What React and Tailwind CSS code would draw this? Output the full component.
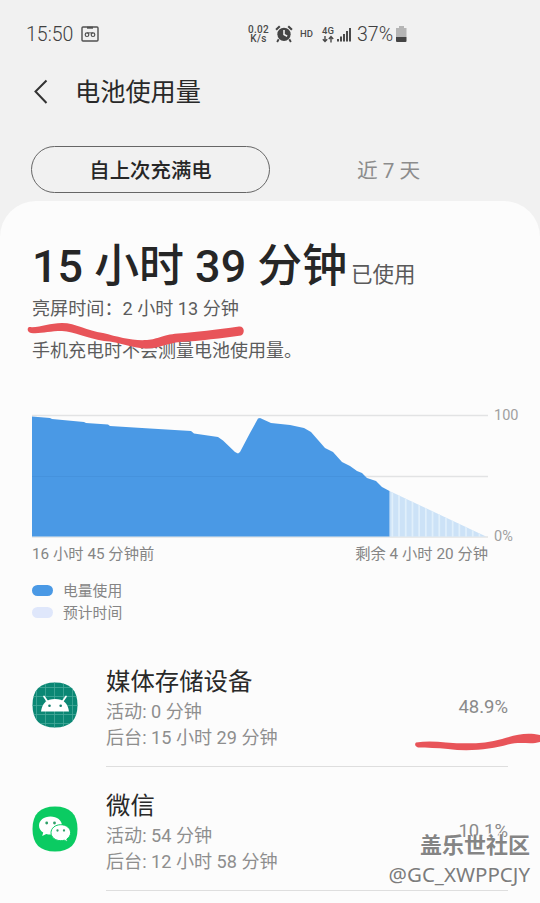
import React from "react";

const used =
  "M32 416.5 L50 418 L52 419 L84 422 L86 423 L108 424.5 L110 426 L150 428.5 L191 431 L194 433.5 L218 437 L223 440.5 L235 452 L238 453.5 L240 452 L250 433 L258 418.5 L260 418 L271 423 L290 425 L304 428 L311 432 L325 448 L333 452 L342 462 L350 466 L357 471 L362 473 L367 478 L376 481 L382 487 L389.5 491 L389.5 536.5 L32 536.5 Z";

const stripes = Array.from({ length: 14 }, (_, i) => 391.5 + i * 6.7);

function Chart() {
  return (
    <svg className="block w-[540px] h-[136px]" viewBox="0 406 540 136">
      <defs>
        <clipPath id="forecast">
          <path d="M389.5 491 L486 536.5 L389.5 536.5 Z" />
        </clipPath>
      </defs>
      <path d="M32 415.5H488M32 476.5H488M32 537H488" stroke="#e2e3e4" strokeWidth="1.3" />
      <path d="M389.5 491 L486 536.5 L389.5 536.5 Z" fill="#cce2f7" />
      <g clipPath="url(#forecast)">
        {stripes.map((x) => (
          <rect key={x} x={x} y="490" width="1.7" height="47" fill="#e0effb" />
        ))}
      </g>
      <path d={used} fill="#4a99e5" />
      <path d="M32 476.5H364" stroke="#4592dd" strokeWidth="1" />
    </svg>
  );
}

function StatusBar() {
  return (
    <div className="flex h-[68px] items-center pl-[26px] text-[#555]">
      <span className="w-[55px] pt-[2px] text-[19.5px] font-light leading-6 text-[#404040]">15:50</span>
      <svg className="h-[16px] w-[18px]" viewBox="0 0 18 16" fill="none" stroke="#505050" strokeWidth="1.4">
        <rect x="1" y="1" width="16" height="14" rx="1" />
        <path d="M6 1.7h6" strokeWidth="2" />
        <circle cx="6" cy="8.7" r="1.8" strokeWidth="1.2" />
        <circle cx="12" cy="8.7" r="1.8" strokeWidth="1.2" />
        <path d="M6 6.9h6" strokeWidth="1" />
      </svg>
      <div className="ml-[148px] w-[23px] text-center text-[10px] font-medium leading-[9.5px] tracking-[0.3px] text-[#4a4a4a]">
        <div>0.02</div>
        <div>K/s</div>
      </div>
      <svg className="ml-[5px] h-[18px] w-[18px]" viewBox="0 0 17 17">
        <circle cx="8.5" cy="8.8" r="6.3" fill="#454545" />
        <path d="M1 4.5L4.5 1.2M16 4.5L12.5 1.2" stroke="#454545" strokeWidth="2" />
        <path d="M3.5 13.5L2 16M13.5 13.5L15 16" stroke="#454545" strokeWidth="1.8" />
        <path d="M8.5 4.7V9l3 1.6" stroke="#f1f1f1" strokeWidth="1.5" fill="none" />
      </svg>
      <span className="ml-[7px] w-[14px] text-[9.5px] font-medium leading-3 text-[#4a4a4a]">HD</span>
      <div className="ml-[7px] flex w-[14px] flex-col items-center">
        <span className="text-[9.5px] font-medium leading-[9px] text-[#4a4a4a]">4G</span>
        <svg className="h-[8px] w-[12px]" viewBox="0 0 12 8" fill="none" stroke="#484848" strokeWidth="1.4">
          <path d="M3 1v5.5M0.8 4.3L3 6.6l2.2-2.3M9 7.5V1.8M6.8 4L9 1.6 11.2 4" />
        </svg>
      </div>
      <svg className="ml-[2px] h-[15px] w-[15px]" viewBox="0 0 15 15" fill="#4b4b4b">
        <rect x="0" y="12" width="2" height="2.5" />
        <rect x="3" y="9.5" width="2" height="5" />
        <rect x="6" y="7" width="2" height="7.5" />
        <rect x="9" y="4" width="2" height="10.5" />
        <rect x="12" y="1" width="2" height="13.5" />
      </svg>
      <span className="ml-[5px] w-[39px] pt-[2px] text-[19.5px] font-light leading-6 text-[#404040]">37%</span>
      <svg className="h-[17px] w-[11px]" viewBox="0 0 11 17">
        <path d="M3 0h5v2h2.5v9H0V2h3z" fill="#b5b5b5" />
        <path d="M0 11h10.5v4a1 1 0 0 1-1 1H1a1 1 0 0 1-1-1z" fill="#444" />
      </svg>
    </div>
  );
}

const squircle =
  "M23 0.5C38 0.5 45.5 8 45.5 23S38 45.5 23 45.5 .5 38 .5 23 8 .5 23 .5Z";

function AndroidIcon() {
  return (
    <svg className="h-[46px] w-[46px]" viewBox="0 0 46 46">
      <clipPath id="tile"><path d={squircle} /></clipPath>
      <path d={squircle} fill="#0b8774" />
      <path
        clipPath="url(#tile)"
        d="M4.5 0v46M13.5 0v46M22.5 0v46M31.5 0v46M40.5 0v46M0 5.5h46M0 14.5h46M0 23.5h46M0 32.5h46M0 41.5h46"
        stroke="#46aa99"
        strokeWidth="0.8"
      />
      <path d="M9 29.5C10 21.5 14.5 17 23 17S36 21.5 37 29.5Z" fill="#fff" />
      <path d="M15.5 19.5L12 14.5M30.5 19.5L34 14.5" stroke="#fff" strokeWidth="1.7" strokeLinecap="round" />
      <circle cx="17.5" cy="23.7" r="1.3" fill="#16806f" />
      <circle cx="28.7" cy="23.7" r="1.3" fill="#16806f" />
    </svg>
  );
}

function WeChatIcon() {
  return (
    <svg className="h-[46px] w-[46px]" viewBox="0 0 46 46">
      <path d={squircle} fill="#0bcb62" />
      <path d="M18.5 10.5C11.9 10.5 7 14.4 7 19.5c0 3 1.6 5.4 4.2 7.1l-1 3.4 4-2c1.3.4 2.8.6 4.3.6C25 28.6 30 24.6 30 19.5S25 10.5 18.5 10.5Z" fill="#fff" />
      <path d="M28.8 18.7c-5.5 0-9.8 3.5-9.8 8s4.300 8 9.800 8c1.200 0 2.500-.2 3.500-.5l3.400 1.800-.9-3c2.300-1.500 3.800-3.700 3.800-6.300 0-4.500-4.300-8-9.800-8Z" fill="#fff" stroke="#0bcb62" strokeWidth="1" />
      <g fill="#2f9f68">
        <circle cx="14.7" cy="17" r="1.4" />
        <circle cx="22.5" cy="17" r="1.4" />
        <circle cx="25.5" cy="24.5" r="1.15" />
        <circle cx="32" cy="24.5" r="1.15" />
      </g>
    </svg>
  );
}

function AppRow({ icon, name, active, background, percent }) {
  return (
    <div className="flex h-[124px] pl-8">
      <div className="w-[74px] pt-[39px]">{icon}</div>
      <div className="flex w-[402px] items-start justify-between border-b border-[#dedede] pt-[22px]">
        <div className="whitespace-nowrap">
          <div className="text-[24.4px] leading-[34px] text-[#292929]">{name}</div>
          <div className="text-[18.1px] leading-[26px] text-[#8e8e8e]">{active}</div>
          <div className="text-[18.1px] leading-[26px] text-[#8e8e8e]">{background}</div>
        </div>
        <div className="pt-[30px] text-[18.5px] leading-6 text-[#8a8a8a]">{percent}</div>
      </div>
    </div>
  );
}

export default function App() {
  return (
    <div className="relative h-[903px] w-[540px] overflow-hidden bg-[#f1f1f1] font-[Roboto,'Noto_Sans_CJK_SC',sans-serif]">
      <StatusBar />
      <div className="flex h-12 items-center pl-[33px]">
        <svg className="h-[26px] w-[16px]" viewBox="0 0 16 26" fill="none" stroke="#333" strokeWidth="2">
          <path d="M13.5 1.5L2.5 12.5l11 11.5" />
        </svg>
        <h1 className="ml-[26px] pt-[2px] text-[25.2px] leading-8 text-[#292929]">电池使用量</h1>
      </div>
      <div className="flex h-[85px] items-start pl-[31px] pt-[30px]">
        <div className="flex h-[47px] w-[239px] items-center justify-center rounded-full border-[1.5px] border-[#666] pt-[3px] text-[20.4px] font-medium text-[#262626]">
          自上次充满电
        </div>
        <div className="ml-[87px] text-[20.7px] leading-[50px] text-[#8c8c8c]">近 7 天</div>
      </div>
      <main className="h-[702px] rounded-t-[36px] bg-[#fcfcfc]">
        <div className="flex h-[94px] items-baseline whitespace-nowrap pl-8 pt-[36px]">
          <span className="text-[44.9px] font-medium leading-[60px] text-[#262626]">15 小时 39 分钟</span>
          <span className="ml-[4px] text-[21.5px] text-[#5a5a5a]">已使用</span>
        </div>
        <div className="pl-8 text-[18.1px] leading-[28px] text-[#5c5c5c]">亮屏时间：2 小时 13 分钟</div>
        <div className="h-[83px] pl-8 pt-[14px] text-[18px] leading-[28px] text-[#5c5c5c]">手机充电时不会测量电池使用量。</div>
        <div className="relative">
          <Chart />
          <span className="absolute left-[494px] top-0 text-[14.5px] leading-5 text-[#a0a0a0]">100</span>
          <span className="absolute left-[494px] top-[121px] text-[14.5px] leading-5 text-[#a0a0a0]">0%</span>
        </div>
        <div className="flex h-[38px] w-[488px] justify-between whitespace-nowrap pl-8 pt-[1px] text-[15.3px] leading-[22px] text-[#858585]">
          <span>16 小时 45 分钟前</span>
          <span>剩余 4 小时 20 分钟</span>
        </div>
        <div className="flex h-[63px] flex-col pl-8 text-[14.8px] leading-[22px] text-[#858585]">
          <div className="flex items-center gap-[10px]">
            <span className="mb-[2px] h-[11px] w-[21px] rounded-full bg-[#4a99e5]" />电量使用
          </div>
          <div className="flex items-center gap-[10px]">
            <span className="mb-[2px] h-[11px] w-[21px] rounded-full bg-[#dfe7fb]" />预计时间
          </div>
        </div>
        <div>
          <AppRow icon={<AndroidIcon />} name="媒体存储设备" active="活动: 0 分钟" background="后台: 15 小时 29 分钟" percent="48.9%" />
          <AppRow icon={<WeChatIcon />} name="微信" active="活动: 54 分钟" background="后台: 12 小时 58 分钟" percent="10.1%" />
        </div>
      </main>
      <svg className="pointer-events-none absolute left-0 top-0 h-[903px] w-[540px]" viewBox="0 0 540 903" fill="#e85459">
        <path d="M29 327C40 328 49 323 62 323C76 323 87 331 103 333C119 337 132 341 147 340C159 339 161 335 178 333.5C196 332 216 330 239 326.5C245 326 245 334 241 335.500C222 338 200 341 180 342C168 343 158 349 145 348.500C132 348 120 342 104 341C86 338 75 332 62 331C49 331 41 334 31 333C27 332 27 328 29 327Z" />
        <path d="M416 742.500C426 741 436 741.500 446 742.500C466 744 485 744 502 739C515 735 526 732 540 735V742C530 745 521 741 508 744.500C492 749 470 752 448 749C437 748 427 747.500 418 747.500C414 746 415 743.500 416 742.500Z" />
      </svg>
      <div className="absolute right-[10px] top-[832px] whitespace-nowrap text-right text-[#858585]">
        <div className="text-[22px] font-bold leading-7 [text-shadow:-1px_-1px_0_#fff,1px_1px_0_#fff]">盖乐世社区</div>
        <div className="font-['Noto_Sans','Open_Sans',sans-serif] text-[20.5px] leading-[29px] text-[#7c7c7c] [text-shadow:1px_1px_0_#fff]">@GC_XWPPCJY</div>
      </div>
    </div>
  );
}
